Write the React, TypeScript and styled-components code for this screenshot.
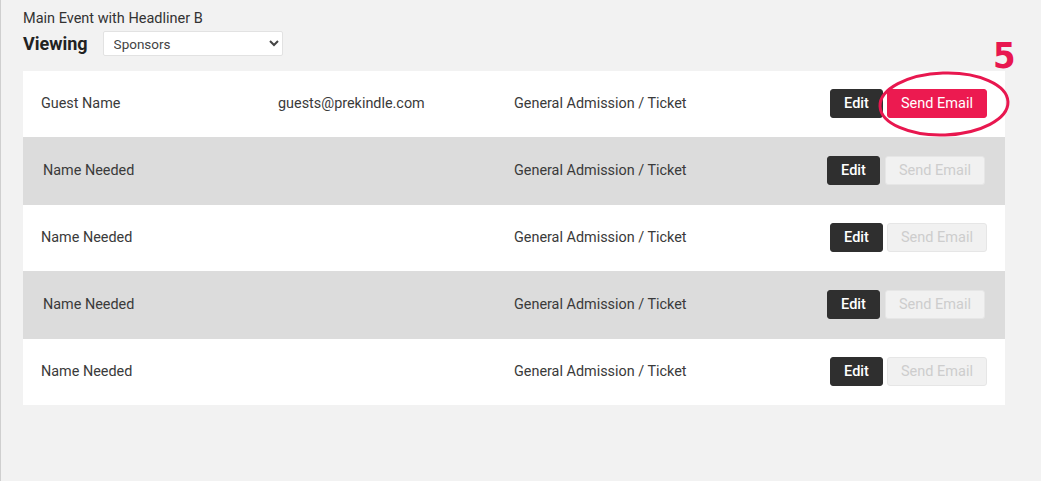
import React from 'react';
import styled, { createGlobalStyle } from 'styled-components';

const GlobalStyle = createGlobalStyle`
  html, body {
    margin: 0;
    padding: 0;
    background: #f2f2f2;
    font-family: Roboto, "Liberation Sans", sans-serif;
  }
`;

const Page = styled.div`
  position: relative;
  min-height: 481px;
  box-sizing: border-box;
  border-left: 1px solid #cfcfcf;
  padding: 10px 36px 0 22px;
`;

const EventTitle = styled.div`
  font-size: 14.5px;
  color: #333;
  line-height: 18px;
`;

const ViewingBar = styled.div`
  display: flex;
  align-items: center;
  gap: 15px;
  margin-top: 3px;
`;

const ViewingLabel = styled.span`
  font-size: 18px;
  font-weight: 700;
  color: #222;
`;

const Select = styled.select`
  width: 180px;
  height: 25px;
  font-family: Roboto, "Liberation Sans", sans-serif;
  font-size: 13.5px;
  color: #444;
  background: #fff;
  border: 1px solid #e2e2e2;
  border-radius: 2px;
  padding: 0 6px;
`;

const Card = styled.div`
  margin-top: 15px;
  background: #fff;
  display: flex;
  flex-direction: column;
`;

const Row = styled.div<{ $shaded?: boolean }>`
  display: grid;
  grid-template-columns: ${p => (p.$shaded ? '235px 236px 1fr auto' : '237px 236px 1fr auto')};
  align-items: center;
  height: ${p => (p.$shaded ? '68.5px' : '65.5px')};
  padding: ${p => (p.$shaded ? '0 20px 0 20px' : '0 18px')};
  background: ${p => (p.$shaded ? '#dcdcdc' : '#fff')};
  font-size: 14.4px;
  color: #3a3a3a;
`;

const Cell = styled.span``;

const Actions = styled.div<{ $shaded?: boolean }>`
  display: flex;
  gap: ${p => (p.$shaded ? '5px' : '4px')};
`;

const Button = styled.button<{ $variant: 'dark' | 'primary' | 'disabled' }>`
  height: 29px;
  border-radius: 3px;
  font-family: Roboto, "Liberation Sans", sans-serif;
  font-size: 14.5px;
  font-weight: ${p => (p.$variant === 'dark' ? 500 : 400)};
  padding: 0;
  cursor: pointer;
  width: ${p => (p.$variant === 'dark' ? '53px' : '100px')};
  background: ${p =>
    p.$variant === 'dark' ? '#2f2f2f' : p.$variant === 'primary' ? '#ec1a50' : '#f1f1f1'};
  color: ${p => (p.$variant === 'disabled' ? '#cdcdcd' : '#fff')};
  border: 1px solid
    ${p => (p.$variant === 'dark' ? '#2f2f2f' : p.$variant === 'primary' ? '#ec1a50' : '#e6e6e6')};
`;

const Callout = styled.svg`
  position: absolute;
  left: 876px;
  top: 70px;
  overflow: visible;
`;

const StepNumber = styled.div`
  position: absolute;
  left: 992px;
  top: 43px;
  font-family: "DejaVu Sans Condensed", "DejaVu Sans", sans-serif;
  font-weight: 700;
  font-size: 36px;
  line-height: 26px;
  color: #e8174f;
`;

type Guest = { name: string; email?: string; ticket: string; canSend: boolean };

const guests: Guest[] = [
  { name: 'Guest Name', email: 'guests@prekindle.com', ticket: 'General Admission / Ticket', canSend: true },
  { name: 'Name Needed', ticket: 'General Admission / Ticket', canSend: false },
  { name: 'Name Needed', ticket: 'General Admission / Ticket', canSend: false },
  { name: 'Name Needed', ticket: 'General Admission / Ticket', canSend: false },
  { name: 'Name Needed', ticket: 'General Admission / Ticket', canSend: false },
];

export default function App() {
  return (
    <>
      <GlobalStyle />
      <Page>
        <EventTitle>Main Event with Headliner B</EventTitle>
        <ViewingBar>
          <ViewingLabel>Viewing</ViewingLabel>
          <Select defaultValue="Sponsors">
            <option>Sponsors</option>
            <option>Guests</option>
          </Select>
        </ViewingBar>

        <Card>
          {guests.map((g, i) => {
            const shaded = i % 2 === 1;
            return (
              <Row key={i} $shaded={shaded}>
                <Cell>{g.name}</Cell>
                <Cell>{g.email}</Cell>
                <Cell>{g.ticket}</Cell>
                <Actions $shaded={shaded}>
                  <Button $variant="dark">Edit</Button>
                  <Button $variant={g.canSend ? 'primary' : 'disabled'}>Send Email</Button>
                </Actions>
              </Row>
            );
          })}
        </Card>

        <Callout width="134" height="68" viewBox="0 0 134 68">
          <ellipse cx="67" cy="34" rx="64" ry="31" fill="none" stroke="#e8174f" strokeWidth="3" transform="rotate(-2 67 34)" />
        </Callout>
        <StepNumber>5</StepNumber>
      </Page>
    </>
  );
}
